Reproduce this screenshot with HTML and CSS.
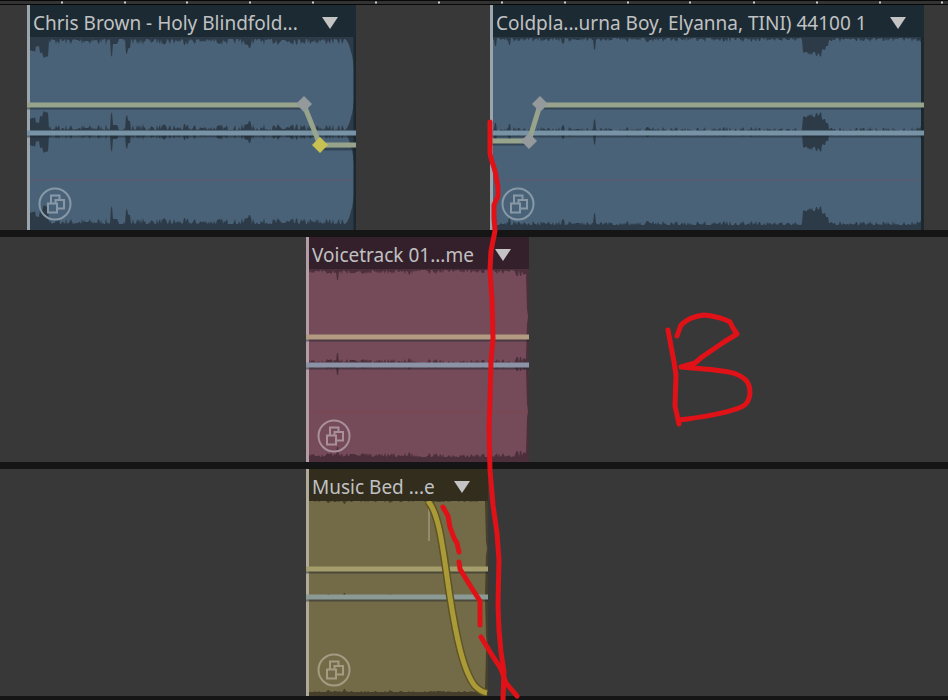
FILE: index.html
```
<!DOCTYPE html>
<html lang="en">
<head>
<meta charset="utf-8">
<title>Multitrack editor</title>
<link rel="stylesheet" href="styles.css">
</head>
<body>
<svg class="defs" aria-hidden="true">
  <symbol id="stack" viewBox="0 0 34 34">
    <circle cx="17" cy="17" r="15.5" fill="none" stroke-width="2"/>
    <g fill="none" stroke-width="2">
      <path d="M13 16V8.500H21.500V13"/>
      <path d="M17.500 16V13H26V21.500H19"/>
      <rect x="10" y="16.500" width="9" height="9"/>
    </g>
  </symbol>
  <symbol id="arrow" viewBox="0 0 16 12"><path d="M0 0H16L8 12Z"/></symbol>
</svg>
<main class="editor">
  <svg class="ruler" viewBox="0 0 948 5" preserveAspectRatio="none" aria-hidden="true">
    <path d="M62 1v3M125 1v3M187 1v3M250 1v3M313 1v3M376 1v3M439 1v3M502 1v3M565 1v3M628 1v3M690 1v3M754 1v3M817 1v3M880 1v3M942 1v3"/>
  </svg>

  <section class="lane lane-music">
    <article class="clip blue">
      <header class="title"><span class="name">Chris Brown - Holy Blindfold...</span><button class="menu" aria-label="Clip menu"><svg><use href="#arrow"/></svg></button></header>
      <svg class="wave" data-wave="holy" viewBox="0 0 329 193" preserveAspectRatio="none">
        <path class="signal"/>
        <path class="mid" d="M3 143H326"/>
        <path class="edge" d="M1.500 0V193"/>
        <path class="end" d="M328 0V193"/>
        <path class="shade" d="M0 71H277M0 99H329"/>
        <path class="pan" d="M0 96H329"/>
        <path class="shade" d="M293 112H329"/>
        <path class="volume" d="M0 68H277L293 108H329"/>
        <path class="point" d="M277 59l8 8-8 8-8-8z"/>
        <path class="point active" d="M293 100l8 8-8 8-8-8z"/>
      </svg>
      <button class="badge" aria-label="Clip group"><svg><use href="#stack"/></svg></button>
    </article>
    <article class="clip blue second">
      <header class="title"><span class="name">Coldpla...urna Boy, Elyanna, TINI) 44100 1</span><button class="menu" aria-label="Clip menu"><svg><use href="#arrow"/></svg></button></header>
      <svg class="wave" data-wave="coldplay" viewBox="0 0 434 193" preserveAspectRatio="none">
        <path class="signal"/>
        <path class="mid" d="M3 143H431"/>
        <path class="edge" d="M1.500 0V193"/>
        <path class="end" d="M432.500 0V193"/>
        <path class="shade" d="M54 71H434M0 99H434M0 107H36"/>
        <path class="pan" d="M0 96H434"/>
        <path class="volume" d="M0 104H39L50 68H434"/>
        <path class="point" d="M39 96l8 8-8 8-8-8z"/>
        <path class="point" d="M50 59l8 8-8 8-8-8z"/>
      </svg>
      <button class="badge" aria-label="Clip group"><svg><use href="#stack"/></svg></button>
    </article>
  </section>

  <section class="lane lane-voice">
    <article class="clip pink">
      <header class="title"><span class="name">Voicetrack 01...me</span><button class="menu" aria-label="Clip menu"><svg><use href="#arrow"/></svg></button></header>
      <svg class="wave" data-wave="voice" viewBox="0 0 223 193" preserveAspectRatio="none">
        <path class="signal"/>
        <path class="mid" d="M3 143H221"/>
        <path class="edge" d="M1.500 0V193"/>
        <path class="shade" d="M0 71H223M0 99H223"/>
        <path class="pan" d="M0 96H223"/>
        <path class="volume" d="M0 68H223"/>
      </svg>
      <button class="badge" aria-label="Clip group"><svg><use href="#stack"/></svg></button>
    </article>
  </section>

  <section class="lane lane-bed">
    <article class="clip olive">
      <header class="title"><span class="name">Music Bed ...e</span><button class="menu" aria-label="Clip menu"><svg><use href="#arrow"/></svg></button></header>
      <svg class="wave" data-wave="bed" viewBox="0 0 182 195" preserveAspectRatio="none">
        <path class="signal"/>
        <path class="edge" d="M1.500 0V195"/>
        <path class="shade" d="M0 71H182M0 99H182"/>
        <path class="pan" d="M0 96H182"/>
        <path class="volume" d="M0 68H182"/>
        <path class="handle" d="M123 6V40"/>
        <path class="fade-shade" d="M122 0C134 14 137 50 144 96C150 134 157 170 169 185Q175 191 181 192"/>
        <path class="fade" d="M122 0C134 14 137 50 144 96C150 134 157 170 169 185Q175 191 181 192"/>
      </svg>
      <button class="badge" aria-label="Clip group"><svg><use href="#stack"/></svg></button>
    </article>
  </section>

  <svg class="marks" viewBox="0 0 948 700" preserveAspectRatio="none" aria-hidden="true">
    <path d="M490 122L490 153C491 161 495 168 496 176L498 187L498 196L494 205L494 218L495 231L491 251L490 270L492 300L493 338L491 362L490 400L489 430L490 470L493 505L497 533L499 560L498 605L499 630L501 652L504 672L503 700"/>
    <path d="M443 507L448 516L450 527L454 538L457 543L459 552"/>
    <path d="M459 562L460 569L471 587L480 601L480 625"/>
    <path d="M481 637L492 655L501 669L506 683L517 696"/>
    <path d="M668 330L674 362L676 375L675 406L679 424"/>
    <path d="M677 336L681 325C688 318 695 316 704 315C714 316 723 318 730 322L733 328L737 334L724 342L702 357L695 363L681 367C701 369 725 370 736 374C746 378 750 383 750 393C749 402 746 406 736 409C719 415 701 417 680 420"/>
  </svg>
</main>
<script src="waves.js"></script>
</body>
</html>
```
FILE: styles.css
```
* { box-sizing: border-box; }

body {
  margin: 0;
  background: #383838;
  font-family: "Noto Sans", "Open Sans", sans-serif;
}

.defs { position: absolute; width: 0; height: 0; }

.editor {
  position: relative;
  display: grid;
  grid-template-rows: 5px 232px 232px 1fr;
  min-height: 100vh;
  overflow: hidden;
}

.ruler {
  display: block;
  width: 100%;
  height: 5px;
  background: #333;
  border-top: 1px solid #080808;
  border-bottom: 1px solid #080808;
}
.ruler path { stroke: #ccc; stroke-width: 2; }

.lane { display: grid; border-bottom: 7px solid #151515; }
.lane-music { grid-template-columns: 27fr 329fr 134fr 434fr 24fr; }
.lane-voice { grid-template-columns: 306fr 223fr 419fr; }
.lane-bed { grid-template-columns: 306fr 182fr 460fr; border-bottom-width: 4px; }

.clip {
  position: relative;
  grid-column: 2;
  display: grid;
  grid-template-rows: 32px 1fr;
  min-width: 0;
  min-height: 0;
  background: var(--quiet);
}
.clip.second { grid-column: 4; }

.blue {
  --head: #1c2a33; --quiet: #2c3b47; --signal: #4a6278;
  --edge: #9ba5ac; --volume: #97a38b; --pan: #7893a5; --icon: #8799a7;
}
.pink {
  --head: #34202a; --quiet: #4b2f3b; --signal: #754a59;
  --edge: #b59da7; --volume: #b39b81; --pan: #8d93a6; --icon: #a98f99;
}
.olive {
  --head: #322d1d; --quiet: #453f2b; --signal: #736a48;
  --edge: #b0aa98; --volume: #a59d6b; --pan: #8b9a95; --icon: #a39c82;
}

.title {
  display: flex;
  align-items: center;
  justify-content: space-between;
  min-width: 0;
  padding: 4px 18px 0 3px;
  border-left: 3px solid var(--edge);
  background: var(--head);
  color: #c0c1c2;
  font-size: 19px;
  line-height: 26px;
}
.name { white-space: nowrap; }

button { padding: 0; border: 0; background: none; }
.menu { flex: none; width: 16px; height: 12px; }
.menu svg { display: block; width: 16px; height: 12px; fill: #c4c4c4; }

.wave { display: block; width: 100%; height: 100%; min-height: 0; overflow: hidden; }
.wave path { fill: none; }
.wave .signal { fill: var(--signal); }
.mid { stroke: #a04040; stroke-width: 1; opacity: 0.25; }
.end { stroke: #1b2830; stroke-width: 3; }
.shade { stroke: #1a242a; stroke-width: 3; opacity: 0.45; }
.pan { stroke: var(--pan); stroke-width: 5; }
.volume { stroke: var(--volume); stroke-width: 5; }
.edge { stroke: var(--edge); stroke-width: 3; }
.wave .point { fill: #949a9c; }
.wave .point.active { fill: #c6c151; }
.handle { stroke: #928b6e; stroke-width: 2; }
.fade-shade { stroke: #5e5426; stroke-width: 8; }
.fade { stroke: #ab9a38; stroke-width: 5; }

.badge { position: absolute; left: 11px; bottom: 9px; width: 34px; height: 34px; }
.badge svg { display: block; width: 34px; height: 34px; stroke: var(--icon); }

.marks {
  position: absolute;
  inset: 0;
  width: 100%;
  height: 100%;
  pointer-events: none;
}
.marks path {
  fill: none;
  stroke: #e01217;
  stroke-width: 5;
  stroke-linecap: round;
  stroke-linejoin: round;
}
```
FILE: waves.js
```
// Each clip: base = quietest gap from full scale, noise = random extra gap,
// dips = [from, to, gap], ends = gaps over the last pixels of the clip.
const waves = {
  holy: {
    width: 329, height: 193, base: 2, noise: 6, seed: 7,
    dips: [[3, 9, 15], [9, 13, 10], [13, 16, 17], [16, 21, 21], [84, 85, 20], [99, 101, 18], [101, 103, 13], [221, 223, 13], [218, 221, 8]],
    ends: [3, 4, 6, 8, 11, 15, 18, 24, 32, 47]
  },
  coldplay: {
    width: 434, height: 193, base: 1, noise: 4, seed: 21,
    dips: [[5, 6, 10], [19, 20, 9], [72, 74, 8], [104, 105, 14], [313, 318, 16], [318, 323, 18], [323, 326, 16], [326, 328, 20], [328, 330, 17], [330, 332, 20], [332, 336, 14], [336, 338, 10]],
    ends: [3, 6, 20, 47]
  },
  voice: {
    width: 223, height: 193, base: 1, noise: 4, seed: 13,
    dips: [[8, 12, 4], [20, 26, 5], [31, 32, 12], [42, 48, 4], [56, 59, 5], [68, 76, 4], [90, 96, 3], [103, 104, 7], [210, 212, 7], [214, 215, 8], [217, 220, 6]],
    ends: [5, 40, 47]
  },
  bed: {
    width: 182, height: 195, base: 0, noise: 1, seed: 5,
    dips: [[21, 25, 2], [37, 39, 3], [84, 86, 2], [101, 103, 2]],
    ends: [40, 47]
  }
};

function gaps({ width, base, noise, seed, dips, ends }) {
  let state = seed;
  const random = () => (state = (state * 16807) % 2147483647) / 2147483647;
  for (let i = 0; i < 9; i++) random();
  const list = [];
  for (let x = 0; x < width; x++) {
    const r = random();
    list.push(base + Math.round(noise * r * r));
  }
  for (const [from, to, gap] of dips) {
    for (let x = from; x <= to; x++) list[x] = gap - Math.round(random() * 2);
  }
  ends.forEach((gap, i) => { list[width - ends.length + i] = gap; });
  return list;
}

function channel(list, top, bottom) {
  const upper = list.map((gap, x) => `${x} ${top + gap}`);
  const lower = list.map((gap, x) => `${x} ${bottom - gap}`).reverse();
  return `M${upper.join("L")}L${lower.join("L")}Z`;
}

for (const svg of document.querySelectorAll("[data-wave]")) {
  const wave = waves[svg.dataset.wave];
  const list = gaps(wave);
  svg.querySelector(".signal").setAttribute("d",
    channel(list, 0, 95) + channel(list, 95, wave.height - 4));
}
```
